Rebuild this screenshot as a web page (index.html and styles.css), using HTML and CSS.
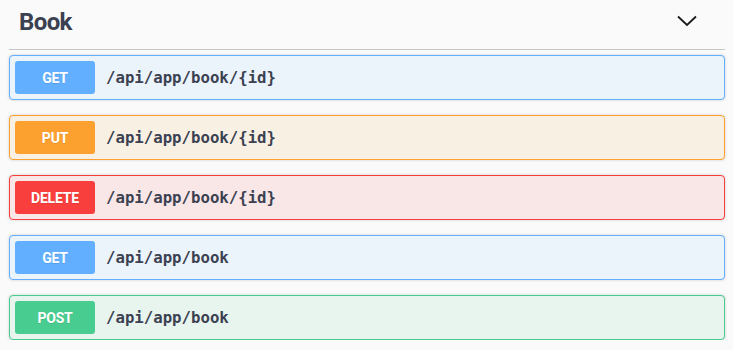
FILE: index.html
```html
<!DOCTYPE html>
<html lang="en">
<head>
<meta charset="utf-8">
<title>Book</title>
<link rel="stylesheet" href="styles.css">
</head>
<body>
<div class="section">
  <div class="tag-header">
    <h3 class="tag-title">Book</h3>
    <svg class="chevron" width="20" height="20" viewBox="0 0 20 20" aria-hidden="true">
      <path d="M1 5.5 L10 14 L19 5.5" fill="none" stroke="#1a1a1a" stroke-width="1.8"/>
    </svg>
  </div>
  <div class="ops">
    <div class="op op-get"><span class="method">GET</span><span class="path">/api/app/book/{id}</span></div>
    <div class="op op-put"><span class="method">PUT</span><span class="path">/api/app/book/{id}</span></div>
    <div class="op op-delete"><span class="method">DELETE</span><span class="path">/api/app/book/{id}</span></div>
    <div class="op op-get"><span class="method">GET</span><span class="path">/api/app/book</span></div>
    <div class="op op-post"><span class="method">POST</span><span class="path">/api/app/book</span></div>
  </div>
</div>
</body>
</html>
```
FILE: styles.css
```css
html, body {
  margin: 0;
  padding: 0;
  background: #fafafa;
}
.section {
  padding: 0 8px 0 9px;
  font-family: Roboto, "Noto Sans", sans-serif;
  color: #3b4151;
}
.tag-header {
  height: 49px;
  border-bottom: 1px solid #c4c5c9;
  display: flex;
  align-items: center;
  justify-content: space-between;
  padding: 0 28px 0 10px;
}
.tag-title {
  margin: 0;
  font-family: Roboto, "Noto Sans", sans-serif;
  font-size: 24px;
  font-weight: 700;
  letter-spacing: -0.6px;
  color: #3b4151;
  line-height: 1;
  margin-top: -6px;
}
.chevron {
  display: block;
  margin-top: -7px;
}
.ops {
  display: flex;
  flex-direction: column;
  gap: 15px;
  padding-top: 5px;
}
.op {
  display: flex;
  align-items: center;
  padding: 5px;
  border: 1px solid;
  border-radius: 4px;
  box-shadow: 0 0 3px rgba(0,0,0,0.19);
}
.method {
  width: 80px;
  height: 33px;
  border-radius: 3px;
  display: flex;
  align-items: center;
  justify-content: center;
  color: #fff;
  font-family: Roboto, "Noto Sans", sans-serif;
  font-weight: 700;
  font-size: 14px;
  letter-spacing: -0.2px;
  text-shadow: 0 1px 0 rgba(0,0,0,0.1);
}
.path {
  margin-left: 11px;
  font-family: "DejaVu Sans Mono", "Liberation Mono", monospace;
  font-weight: 700;
  font-size: 15.7px;
  color: #3b4151;
}
.op-get { border-color: #61affe; background: #ebf3fb; }
.op-get .method { background: #61affe; }
.op-put { border-color: #fca130; background: #f9f0e4; }
.op-put .method { background: #fca130; }
.op-delete { border-color: #f93e3e; background: #f9e6e6; }
.op-delete .method { background: #f93e3e; }
.op-post { border-color: #49cc90; background: #e8f4ee; }
.op-post .method { background: #49cc90; }
```
